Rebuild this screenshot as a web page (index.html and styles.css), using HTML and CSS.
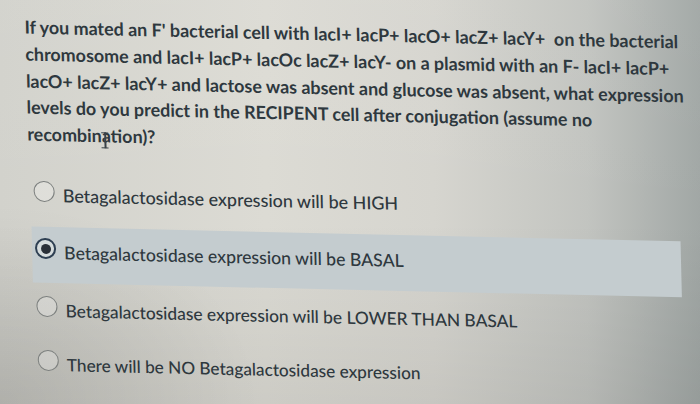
FILE: index.html
```html
<!DOCTYPE html>
<html>
<head>
<meta charset="utf-8">
<link rel="stylesheet" href="styles.css">
</head>
<body>
<div class="page">
  <p class="question">If you mated an F' bacterial cell with lacI+ lacP+ lacO+ lacZ+ lacY+&nbsp; on the bacterial<br>chromosome and lacI+ lacP+ lacOc lacZ+ lacY- on a plasmid with an F- lacI+ lacP+<br>lacO+ lacZ+ lacY+ and lactose was absent and glucose was absent, what expression<br>levels do you predict in the RECIPENT cell after conjugation (assume no<br>recombin<span class="caret"></span>ation)?</p>
  <div class="answers">
    <label class="answer a1"><span class="radio"></span><span class="txt">Betagalactosidase expression will be HIGH</span></label>
    <label class="answer a2 selected"><span class="radio"></span><span class="txt">Betagalactosidase expression will be BASAL</span></label>
    <label class="answer a3"><span class="radio"></span><span class="txt">Betagalactosidase expression will be LOWER THAN BASAL</span></label>
    <label class="answer a4"><span class="radio"></span><span class="txt">There will be NO Betagalactosidase expression</span></label>
  </div>
</div>
</body>
</html>
```

FILE: styles.css
```css
html, body {
  margin: 0;
  padding: 0;
}
body {
  width: 700px;
  height: 404px;
  overflow: hidden;
  background:
    radial-gradient(ellipse 260px 200px at 0% 100%, rgba(0,0,0,0.1), rgba(0,0,0,0) 100%),
    linear-gradient(to bottom, rgba(255,255,255,0.04) 0%, rgba(0,0,0,0) 55%, rgba(0,0,0,0.07) 100%),
    linear-gradient(to right, #d2d2cc 0%, #dcdbd4 38%, #d6d5cf 62%, #c2c4c0 84%, #a1a7a5 100%);
  font-family: "Lato", "Liberation Sans", sans-serif;
  color: #2e383e;
}
.page {
  padding: 13px 10px 0 24px;
  transform-origin: 0 0;
  transform: skew(1.4deg, 1.3deg);
}
.question {
  margin: 0;
  font-weight: 700;
  font-size: 17.9px;
  line-height: 26.8px;
  white-space: nowrap;
}
.caret {
  display: inline-block;
  position: relative;
  width: 0;
  height: 0;
}
.caret::before {
  content: "";
  position: absolute;
  left: 0;
  top: -10px;
  width: 7px;
  height: 15.5px;
  border-top: 1.5px solid #3a4248;
  border-bottom: 1.5px solid #3a4248;
  box-sizing: border-box;
}
.caret::after {
  content: "";
  position: absolute;
  left: 2.8px;
  top: -10px;
  width: 1.5px;
  height: 15.5px;
  background: #3a4248;
}
.answers {
  margin-top: 16px;
  display: flex;
  flex-direction: column;
}
.answer {
  display: flex;
  align-items: flex-start;
  box-sizing: border-box;
  padding-left: 5px;
  font-size: 17.9px;
  font-weight: 500;
}
.a1 { padding-top: 17.5px; height: 63px; }
.a2 {
  margin-left: 2px;
  padding-left: 3px;
  padding-top: 11.5px;
  width: 649px;
  height: 56px;
  background: #c4cccf;
  font-size: 17.65px;
}
.a3 { padding-top: 13.5px; height: 54px; font-size: 17.35px; }
.a4 { padding-top: 13.5px; height: 54px; font-size: 17.2px; }
.radio {
  width: 21px;
  height: 21px;
  border: 1.4px solid #7d807f;
  border-radius: 50%;
  box-sizing: border-box;
  margin-right: 8px;
  flex: none;
  background: rgba(255,255,255,0.25);
}
.selected .radio {
  border: 2px solid #2e3f52;
  position: relative;
  background: #d6dcdd;
}
.selected .radio::after {
  content: "";
  position: absolute;
  left: 3.5px;
  top: 3.5px;
  width: 10px;
  height: 10px;
  border-radius: 50%;
  background: #2a3038;
}
.txt {
  line-height: 21px;
  position: relative;
  top: 4px;
}
```
